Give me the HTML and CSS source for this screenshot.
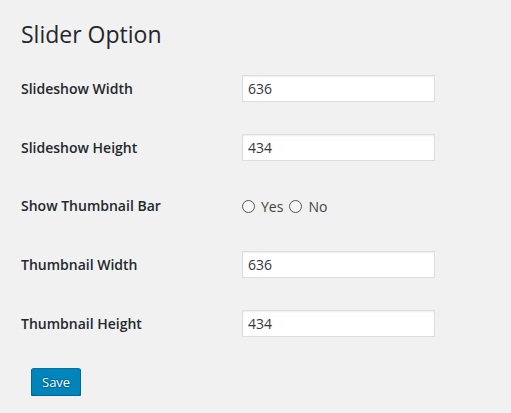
FILE: index.html
```html
<!DOCTYPE html>
<html>
<head>
<meta charset="utf-8">
<link rel="stylesheet" href="styles.css">
</head>
<body>
<div class="wrap">
  <h1 class="title">Slider Option</h1>
  <form class="form">
    <div class="row">
      <label class="label">Slideshow Width</label>
      <input class="text" type="text" value="636">
    </div>
    <div class="row">
      <label class="label">Slideshow Height</label>
      <input class="text" type="text" value="434">
    </div>
    <div class="row row-radio">
      <label class="label">Show Thumbnail Bar</label>
      <div class="radios">
        <span class="radio"></span><span class="opt">Yes</span>
        <span class="radio"></span><span class="opt">No</span>
      </div>
    </div>
    <div class="row">
      <label class="label">Thumbnail Width</label>
      <input class="text" type="text" value="636">
    </div>
    <div class="row">
      <label class="label">Thumbnail Height</label>
      <input class="text" type="text" value="434">
    </div>
    <div class="actions">
      <button type="button" class="btn">Save</button>
    </div>
  </form>
</div>
</body>
</html>
```
FILE: styles.css
```css
html, body {
  margin: 0;
  padding: 0;
  background: #f1f1f1;
}
body {
  font-family: "Open Sans", "Noto Sans", sans-serif;
  color: #23282d;
}
.wrap {
  padding: 19px 0 0 21px;
}
.title {
  margin: 0;
  font-size: 23px;
  font-weight: 400;
  line-height: 30px;
  color: #23282d;
}
.form {
  margin-top: 10px;
}
.row {
  display: grid;
  grid-template-columns: 221px 193px;
  align-items: center;
  height: 59px;
}
.row-radio {
  height: 58px;
}
.label {
  font-size: 14px;
  font-weight: 600;
  color: #23282d;
  line-height: 18px;
}
.text {
  box-sizing: border-box;
  width: 193px;
  height: 27px;
  margin: 0;
  padding: 0 5px;
  border: 1px solid #ddd;
  background: #fff;
  box-shadow: inset 0 1px 2px rgba(0, 0, 0, 0.07);
  font-family: "Open Sans", "Noto Sans", sans-serif;
  font-size: 14px;
  color: #32373c;
  outline: none;
}
.radios {
  display: flex;
  align-items: center;
  font-size: 14px;
  color: #444;
  margin-top: 1px;
}
.radio {
  box-sizing: border-box;
  width: 13px;
  height: 13px;
  border: 1px solid #555;
  border-radius: 50%;
  background: #f6f6f6;
  margin-right: 6px;
}
.opt {
  margin-right: 6px;
  line-height: 18px;
}
.actions {
  padding: 15px 0 0 10px;
}
.btn {
  box-sizing: border-box;
  height: 28px;
  padding: 0 10px 1px;
  border: 1px solid;
  border-color: #0073aa #006799 #006799;
  border-radius: 3px;
  background: #0085ba;
  box-shadow: 0 1px 0 #006799;
  color: #fff;
  font-family: "Open Sans", "Noto Sans", sans-serif;
  font-size: 13px;
  line-height: 26px;
  text-shadow: 0 -1px 1px #006799, 1px 0 1px #006799, 0 1px 1px #006799, -1px 0 1px #006799;
}
```
